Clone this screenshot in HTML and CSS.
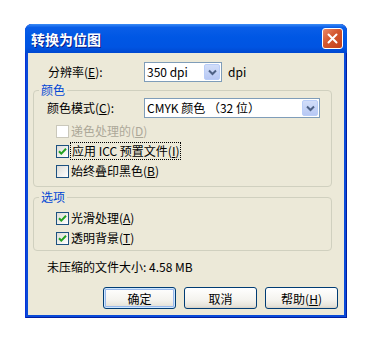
FILE: index.html
```html
<!DOCTYPE html>
<html lang="zh-CN">
<head>
    <meta charset="UTF-8">
    <title>转换为位图</title>
    <link rel="stylesheet" href="styles.css">
</head>
<body>
    <div class="window">
        <div class="titlebar">
            <span class="title">转换为位图</span>
            <span class="close">
                <svg width="13" height="13" viewBox="0 0 13 13"><path d="M2.5 2.5L10.5 10.5M10.5 2.5L2.5 10.5" stroke="#fff" stroke-width="2" stroke-linecap="round"/></svg>
            </span>
        </div>
        <div class="client">
            <div class="row res-row">
                <span class="lbl">分辨率(<u>E</u>):</span>
                <div class="combo combo-dpi">
                    <span class="combo-text">350 dpi</span>
                    <span class="arrow"><svg width="9" height="7" viewBox="0 0 9 7"><path d="M1 1.5L4.5 5L8 1.5" fill="none" stroke="#4d6185" stroke-width="2"/></svg></span>
                </div>
                <span class="unit">dpi</span>
            </div>

            <fieldset class="group group-color">
                <legend>颜色</legend>
                <div class="row mode-row">
                    <span class="lbl lbl-mode">颜色模式(<u>C</u>):</span>
                    <div class="combo combo-mode">
                        <span class="combo-text">CMYK 颜色 （32 位）</span>
                        <span class="arrow"><svg width="9" height="7" viewBox="0 0 9 7"><path d="M1 1.5L4.5 5L8 1.5" fill="none" stroke="#4d6185" stroke-width="2"/></svg></span>
                    </div>
                </div>
                <div class="checks">
                    <div class="check disabled"><span class="box"></span><span>递色处理的(<u>D</u>)</span></div>
                    <div class="check"><span class="box"><svg width="11" height="11" viewBox="0 0 11 11"><path d="M2 5.2L4.3 7.6L9 2.8" fill="none" stroke="#21a121" stroke-width="2"/></svg></span><span class="focus">应用 ICC 预置文件(<u>I</u>)</span></div>
                    <div class="check"><span class="box"></span><span>始终叠印黑色(<u>B</u>)</span></div>
                </div>
            </fieldset>

            <fieldset class="group group-opts">
                <legend>选项</legend>
                <div class="checks">
                    <div class="check"><span class="box"><svg width="11" height="11" viewBox="0 0 11 11"><path d="M2 5.2L4.3 7.6L9 2.8" fill="none" stroke="#21a121" stroke-width="2"/></svg></span><span>光滑处理(<u>A</u>)</span></div>
                    <div class="check"><span class="box"><svg width="11" height="11" viewBox="0 0 11 11"><path d="M2 5.2L4.3 7.6L9 2.8" fill="none" stroke="#21a121" stroke-width="2"/></svg></span><span>透明背景(<u>T</u>)</span></div>
                </div>
            </fieldset>

            <div class="summary">未压缩的文件大小: 4.58 MB</div>

            <div class="buttons">
                <button class="btn default">确定</button>
                <button class="btn">取消</button>
                <button class="btn">帮助(<u>H</u>)</button>
            </div>
        </div>
    </div>
</body>
</html>
```

FILE: styles.css
```css
body {
    margin: 0;
    background-color: #fff;
    font-family: "Noto Sans CJK SC", sans-serif;
    font-size: 12px;
    color: #000;
}

.window {
    width: 322px;
    margin: 24px 0 0 25px;
    padding: 0 3px 3px;
    box-sizing: border-box;
    background: #0a4ad8;
    border-radius: 7px 7px 0 0;
    box-shadow: inset 1px 0 0 #0831d9, inset -1px 0 0 #001ea0, inset 0 -1px 0 #001ea0;
}

.titlebar {
    height: 29px;
    margin: 0 -3px;
    padding: 0 4px 0 6px;
    display: flex;
    align-items: center;
    justify-content: space-between;
    border-radius: 7px 7px 0 0;
    background: linear-gradient(#3c8cf6 0%, #0a5ee8 12%, #0057e4 45%, #0054e2 80%, #0048d0 100%);
}

.title {
    color: #fff;
    font-size: 14px;
    font-weight: bold;
    line-height: 18px;
    text-shadow: 1px 1px 0 #0a1e8a;
}

.close {
    width: 21px;
    height: 21px;
    box-sizing: border-box;
    border: 1px solid #fff;
    border-radius: 3px;
    background: linear-gradient(135deg, #e9896a, #d3562e 45%, #c2401c);
    display: flex;
    align-items: center;
    justify-content: center;
}

.client {
    background: #ece9d8;
    padding: 9px 6px 6px 0;
}

.row {
    display: flex;
    align-items: center;
    height: 20px;
}

.res-row {
    margin-left: 20px;
}

.lbl {
    width: 96px;
    line-height: 16px;
}

.lbl-mode {
    width: 97px;
}

.combo {
    height: 20px;
    box-sizing: border-box;
    border: 1px solid #7f9db9;
    background: #fff;
    display: flex;
    align-items: center;
    justify-content: space-between;
    padding-left: 2px;
}

.combo-text {
    line-height: 16px;
}

.combo-dpi {
    width: 78px;
}

.combo-mode {
    flex: 1;
}

.arrow {
    width: 16px;
    height: 16px;
    margin-right: 1px;
    box-sizing: border-box;
    border: 1px solid #b9cdf8;
    border-radius: 2px;
    background: linear-gradient(#d2def9, #b7c8f4);
    display: flex;
    align-items: center;
    justify-content: center;
}

.unit {
    margin-left: 6px;
    line-height: 16px;
}

.group {
    margin: 0 6px 0 5px;
    padding: 0 11px 5px 13px;
    min-width: 0;
    border: 1px solid #d0d0bf;
    border-radius: 4px;
}

.group legend {
    margin-left: -8px;
    padding: 0 2px;
    line-height: 16px;
    color: #0046d5;
}

.group-opts {
    margin-top: 2px;
    padding-bottom: 2px;
}

.checks {
    margin: 3px 0 0 9px;
}

.check {
    display: flex;
    align-items: center;
    height: 20px;
    line-height: 16px;
}

.box {
    width: 13px;
    height: 13px;
    margin-right: 2px;
    box-sizing: border-box;
    border: 1px solid #1c5180;
    background: linear-gradient(135deg, #dcdcd7, #fff);
    display: flex;
    align-items: center;
    justify-content: center;
}

.check.disabled {
    color: #aca899;
}

.check.disabled .box {
    border-color: #cac8bb;
    background: #fff;
}

.focus {
    outline: 1px dotted #000;
    padding: 0 1px;
}

.summary {
    margin: 8px 0 0 19px;
    line-height: 16px;
}

.buttons {
    display: flex;
    justify-content: flex-end;
    gap: 8px;
    margin-top: 12px;
}

.btn {
    width: 73px;
    height: 22px;
    padding: 0;
    font-family: inherit;
    font-size: 12px;
    color: #000;
    border: 1px solid #003c74;
    border-radius: 3px;
    background: linear-gradient(#fff, #f4f3ee 60%, #e6e3da 90%, #d6d0c5);
}

.btn.default {
    box-shadow: inset 0 0 0 1px #cee7ff, inset 0 0 0 2px #98b8ea;
}
```
